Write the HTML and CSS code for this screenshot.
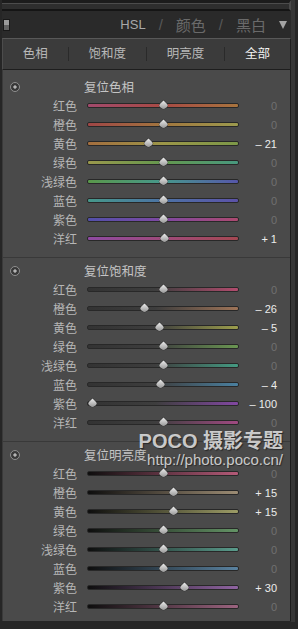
FILE: index.html
```html
<!DOCTYPE html>
<html lang="zh">
<head>
    <meta charset="UTF-8">
    <title>HSL</title>
    <link rel="stylesheet" href="styles.css">
</head>
<body>
    <div class="wrap">
        <div class="topstrip"></div>
        <div class="head">
            <span class="grip"></span>
            <div class="modes">
                <span class="on">HSL</span>
                <span class="sep">/</span>
                <span class="cjk">颜色</span>
                <span class="sep">/</span>
                <span class="cjk">黑白</span>
                <span class="arrow"></span>
            </div>
        </div>
        <div class="tabs">
            <span class="tab">色相</span>
            <span class="tab">饱和度</span>
            <span class="tab">明亮度</span>
            <span class="tab active">全部</span>
        </div>

        <div class="panel">
            <div class="section">
                <div class="sec-head"><span class="reset"></span><span class="sec-title">复位色相</span></div>
                <div class="row"><span class="label">红色</span><div class="track h-red"><i class="thumb" style="left:76px"></i></div><span class="val">0</span></div>
                <div class="row"><span class="label">橙色</span><div class="track h-orange"><i class="thumb" style="left:76px"></i></div><span class="val">0</span></div>
                <div class="row"><span class="label">黄色</span><div class="track h-yellow"><i class="thumb" style="left:61px"></i></div><span class="val set">– 21</span></div>
                <div class="row"><span class="label">绿色</span><div class="track h-green"><i class="thumb" style="left:76px"></i></div><span class="val">0</span></div>
                <div class="row"><span class="label">浅绿色</span><div class="track h-aqua"><i class="thumb" style="left:76px"></i></div><span class="val">0</span></div>
                <div class="row"><span class="label">蓝色</span><div class="track h-blue"><i class="thumb" style="left:76px"></i></div><span class="val">0</span></div>
                <div class="row"><span class="label">紫色</span><div class="track h-purple"><i class="thumb" style="left:76px"></i></div><span class="val">0</span></div>
                <div class="row"><span class="label">洋红</span><div class="track h-magenta"><i class="thumb" style="left:77px"></i></div><span class="val set">+ 1</span></div>
            </div>

            <div class="section">
                <div class="sec-head"><span class="reset"></span><span class="sec-title">复位饱和度</span></div>
                <div class="row"><span class="label">红色</span><div class="track s-red"><i class="thumb" style="left:76px"></i></div><span class="val">0</span></div>
                <div class="row"><span class="label">橙色</span><div class="track s-orange"><i class="thumb" style="left:57.5px"></i></div><span class="val set">– 26</span></div>
                <div class="row"><span class="label">黄色</span><div class="track s-yellow"><i class="thumb" style="left:72.5px"></i></div><span class="val set">– 5</span></div>
                <div class="row"><span class="label">绿色</span><div class="track s-green"><i class="thumb" style="left:76px"></i></div><span class="val">0</span></div>
                <div class="row"><span class="label">浅绿色</span><div class="track s-aqua"><i class="thumb" style="left:76px"></i></div><span class="val">0</span></div>
                <div class="row"><span class="label">蓝色</span><div class="track s-blue"><i class="thumb" style="left:73px"></i></div><span class="val set">– 4</span></div>
                <div class="row"><span class="label">紫色</span><div class="track s-purple"><i class="thumb" style="left:5px"></i></div><span class="val set">– 100</span></div>
                <div class="row"><span class="label">洋红</span><div class="track s-magenta"><i class="thumb" style="left:76px"></i></div><span class="val">0</span></div>
            </div>

            <div class="section">
                <div class="sec-head"><span class="reset"></span><span class="sec-title">复位明亮度</span></div>
                <div class="row"><span class="label">红色</span><div class="track l-red"><i class="thumb" style="left:76px"></i></div><span class="val">0</span></div>
                <div class="row"><span class="label">橙色</span><div class="track l-orange"><i class="thumb" style="left:86.5px"></i></div><span class="val set">+ 15</span></div>
                <div class="row"><span class="label">黄色</span><div class="track l-yellow"><i class="thumb" style="left:86.5px"></i></div><span class="val set">+ 15</span></div>
                <div class="row"><span class="label">绿色</span><div class="track l-green"><i class="thumb" style="left:76px"></i></div><span class="val">0</span></div>
                <div class="row"><span class="label">浅绿色</span><div class="track l-aqua"><i class="thumb" style="left:76px"></i></div><span class="val">0</span></div>
                <div class="row"><span class="label">蓝色</span><div class="track l-blue"><i class="thumb" style="left:76px"></i></div><span class="val">0</span></div>
                <div class="row"><span class="label">紫色</span><div class="track l-purple"><i class="thumb" style="left:97px"></i></div><span class="val set">+ 30</span></div>
                <div class="row"><span class="label">洋红</span><div class="track l-magenta"><i class="thumb" style="left:76px"></i></div><span class="val">0</span></div>
            </div>
        </div>
    </div>
    <div class="rail"></div>

    <div class="watermark">
        <div class="wm-logo">POCO 摄影专题</div>
        <div class="wm-url">http://photo.poco.cn/</div>
    </div>
</body>
</html>
```

FILE: styles.css
```css
body {
    margin: 0;
    height: 629px;
    overflow: hidden;
    display: flex;
    align-items: flex-start;
    background-color: #262626;
    font-family: "Liberation Sans", "Noto Sans CJK SC", sans-serif;
    position: relative;
}
.wrap {
    width: 289px;
    margin-left: 2px;
}
.rail {
    width: 4px;
    height: 622px;
    background-color: #363636;
}

/* top edge of the panel above */
.topstrip {
    height: 6px;
    border-top: 3px solid #1c1c1c;
    border-bottom: 2px solid #151515;
    border-right: 2px solid #4a4a4a;
    background-color: #2e2e2e;
    box-shadow: inset 0 1px #4c4c4c;
}
.head {
    height: 27px;
    display: flex;
    align-items: center;
    background-color: #2a2a2a;
}
.grip {
    width: 5px;
    height: 10px;
    margin-left: 1px;
    border: 1px solid #181818;
    background: linear-gradient(#9a9a9a 50%, #626262 50%);
}
.modes {
    margin-left: auto;
    margin-right: 4px;
    display: flex;
    align-items: center;
    gap: 13px;
    color: #6a6a6a;
}
.modes .on {
    font-size: 13px;
    color: #a8a8a8;
}
.modes .cjk {
    font-size: 15px;
}
.modes .sep {
    font-size: 15px;
    color: #585858;
}
.arrow {
    width: 0;
    height: 0;
    margin-left: 0;
    border-top: 8px solid #a4a4a4;
    border-left: 4.5px solid transparent;
    border-right: 4.5px solid transparent;
}

.tabs {
    height: 30px;
    display: flex;
    align-items: center;
    background-color: #3b3b3b;
    border: 1px solid;
    border-color: #585858 #1e1e1e #1e1e1e #4c4c4c;
}
.tab {
    flex: auto;
    text-align: center;
    font-size: 12.5px;
    line-height: 14px;
    color: #b8b8b8;
}
.tab + .tab {
    border-left: 1px solid #2a2a2a;
}
.tab.active {
    color: #f2f2f2;
}

.panel {
    height: 544px;
    padding-top: 7px;
    background-color: #4a4a4a;
    border-left: 1px solid #3a3a3a;
    border-right: 1px solid #1c1c1c;
}
.section {
    padding-bottom: 9px;
}
.section + .section {
    border-top: 1px solid #393939;
    padding-top: 3px;
}
.section:last-child {
    padding-bottom: 5px;
}
.sec-head {
    height: 19px;
    display: flex;
    align-items: center;
}
.reset {
    width: 8px;
    height: 8px;
    margin-left: 7px;
    border: 1px solid #8e8e8e;
    border-radius: 50%;
    background: radial-gradient(circle, #b4b4b4 0 1.3px, #383838 2px);
}
.sec-title {
    margin-left: 64px;
    font-size: 12.5px;
    color: #c4c4c4;
}
.row {
    height: 19px;
    display: flex;
    align-items: center;
}
.label {
    width: 74px;
    text-align: right;
    font-size: 12px;
    color: #b6b6b6;
}
.track {
    position: relative;
    width: 150px;
    height: 3px;
    margin-left: 10px;
    border: 1px solid #282828;
    border-radius: 2px;
}
.thumb {
    position: absolute;
    top: -2px;
    width: 7px;
    height: 7px;
    margin-left: -4.5px;
    transform: rotate(45deg);
    border-radius: 0 2px 4px 2px;
    background: linear-gradient(135deg, #ececec, #8a8a8a);
    box-shadow: 0 0 0 0.5px #2e2e2e;
}
.val {
    width: 38px;
    text-align: right;
    font-size: 11px;
    color: #707070;
}
.val.set {
    color: #ececec;
}

/* hue */
.h-red { background: linear-gradient(90deg, #a24a6c, #a84a44 50%, #a8743e); }
.h-orange { background: linear-gradient(90deg, #a04646, #a2763e 50%, #9c9a4e); }
.h-yellow { background: linear-gradient(90deg, #a46e3e, #9c9648 50%, #7c9848); }
.h-green { background: linear-gradient(90deg, #9a984c, #64984e 50%, #48987e); }
.h-aqua { background: linear-gradient(90deg, #5a984a, #46988c 50%, #5656aa); }
.h-blue { background: linear-gradient(90deg, #46988a, #4c72a4 50%, #5c52a8); }
.h-purple { background: linear-gradient(90deg, #5250aa, #7e48a2 50%, #ac4a70); }
.h-magenta { background: linear-gradient(90deg, #8e4aa2, #9e4a7a 50%, #a44852); }

/* saturation */
.s-red { background: linear-gradient(90deg, #333, #3e3e3e 45%, #b24c6e); }
.s-orange { background: linear-gradient(90deg, #333, #3e3e3e 45%, #9e7458); }
.s-yellow { background: linear-gradient(90deg, #333, #3e3e3e 45%, #9c9e4c); }
.s-green { background: linear-gradient(90deg, #333, #3e3e3e 45%, #6a9652); }
.s-aqua { background: linear-gradient(90deg, #333, #3e3e3e 45%, #449a82); }
.s-blue { background: linear-gradient(90deg, #333, #3e3e3e 45%, #4a80a0); }
.s-purple { background: linear-gradient(90deg, #333, #3e3e3e 45%, #8248a2); }
.s-magenta { background: linear-gradient(90deg, #333, #3e3e3e 45%, #a04a82); }

/* luminance */
.l-red { background: linear-gradient(90deg, #0e0e0e, #b45a78); }
.l-orange { background: linear-gradient(90deg, #0e0e0e, #9c8c74); }
.l-yellow { background: linear-gradient(90deg, #0e0e0e, #9c9c66); }
.l-green { background: linear-gradient(90deg, #0e0e0e, #649466); }
.l-aqua { background: linear-gradient(90deg, #0e0e0e, #5a9c8c); }
.l-blue { background: linear-gradient(90deg, #0e0e0e, #5a82a0); }
.l-purple { background: linear-gradient(90deg, #0e0e0e, #9064a2); }
.l-magenta { background: linear-gradient(90deg, #0e0e0e, #9c6480); }

/* site watermark lying over the panel */
.watermark {
    position: absolute;
    top: 431px;
    right: 15px;
    text-align: right;
    color: rgba(236, 236, 236, 0.82);
    text-shadow: 1px 1px 1px rgba(0, 0, 0, 0.45);
}
.wm-logo {
    font-size: 20px;
    line-height: 20px;
    font-weight: bold;
}
.wm-url {
    font-size: 15px;
    line-height: 17px;
}
```
